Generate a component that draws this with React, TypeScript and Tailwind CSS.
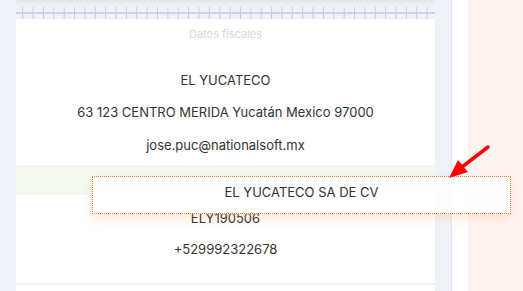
import React from "react";

const ticks = Array.from({ length: 40 }, (_, i) => 6.7 + i * 10.37);

export default function App() {
  return (
    <div
      className="relative w-[523px] h-[291px] overflow-hidden flex bg-[#eff3f8]"
      style={{ fontFamily: "Inter, 'Noto Sans', sans-serif" }}
    >
      <div className="w-[16px] shrink-0" />
      <div className="w-[419px] shrink-0 flex flex-col">
        <div className="relative h-[19px]">
          <div className="absolute left-0 right-0 top-0 h-[5px] bg-gradient-to-b from-[#e1e5eb] to-transparent" />
          <svg width="419" height="19" className="absolute left-0 top-0">
            <rect x="0" y="12" width="419" height="2" fill="#d6cbef" />
            {ticks.map((x, i) => (
              <line key={i} x1={x} y1="7" x2={x} y2="19" stroke="#c6cdd6" strokeWidth="1" />
            ))}
          </svg>
        </div>
        <div className="h-[264px] bg-white flex flex-col items-center text-[13px] text-[#333333]">
          <div className="pt-[9px] text-[11px] leading-[12px] text-[#d0dae5]">Datos fiscales</div>
          <div className="h-[24px]" />
          <div className="h-[32px] leading-[32px]">EL YUCATECO</div>
          <div className="h-[32px] leading-[32px]">63 123 CENTRO MERIDA Yucatán Mexico 97000</div>
          <div className="mt-[1px] h-[32px] leading-[32px]">jose.puc@nationalsoft.mx</div>
          <div className="mt-[4px] h-[30px] w-full bg-[#f3f9f0]" />
          <div className="mt-[8px] h-[30px] leading-[30px]">ELY190506</div>
          <div className="h-[32px] leading-[32px]">+529992322678</div>
        </div>
        <div className="h-[2px]" />
        <div className="flex-1 bg-white" />
      </div>
      <div className="w-[16px] shrink-0" />
      <div className="w-[1px] shrink-0 bg-[#e1e7ef]" />
      <div className="w-[16px] shrink-0 bg-white" />
      <div className="flex-1 bg-[#fdf4ef]" />

      <div className="absolute left-[92px] top-[176px] w-[419px] h-[38px] border border-dotted border-[#f9741a] bg-white/85 shadow-[0_4px_10px_rgba(255,120,60,0.18)] text-center text-[13px] text-[#333333] leading-[20px] pt-[5px]">
        EL YUCATECO SA DE CV
      </div>

      <svg className="absolute left-0 top-0" width="523" height="291">
        <line x1="488" y1="147" x2="462" y2="167" stroke="#ff0000" strokeWidth="3.5" strokeLinecap="round" />
        <polygon points="449,178 458,160 468,172" fill="#ff0000" />
      </svg>
    </div>
  );
}
